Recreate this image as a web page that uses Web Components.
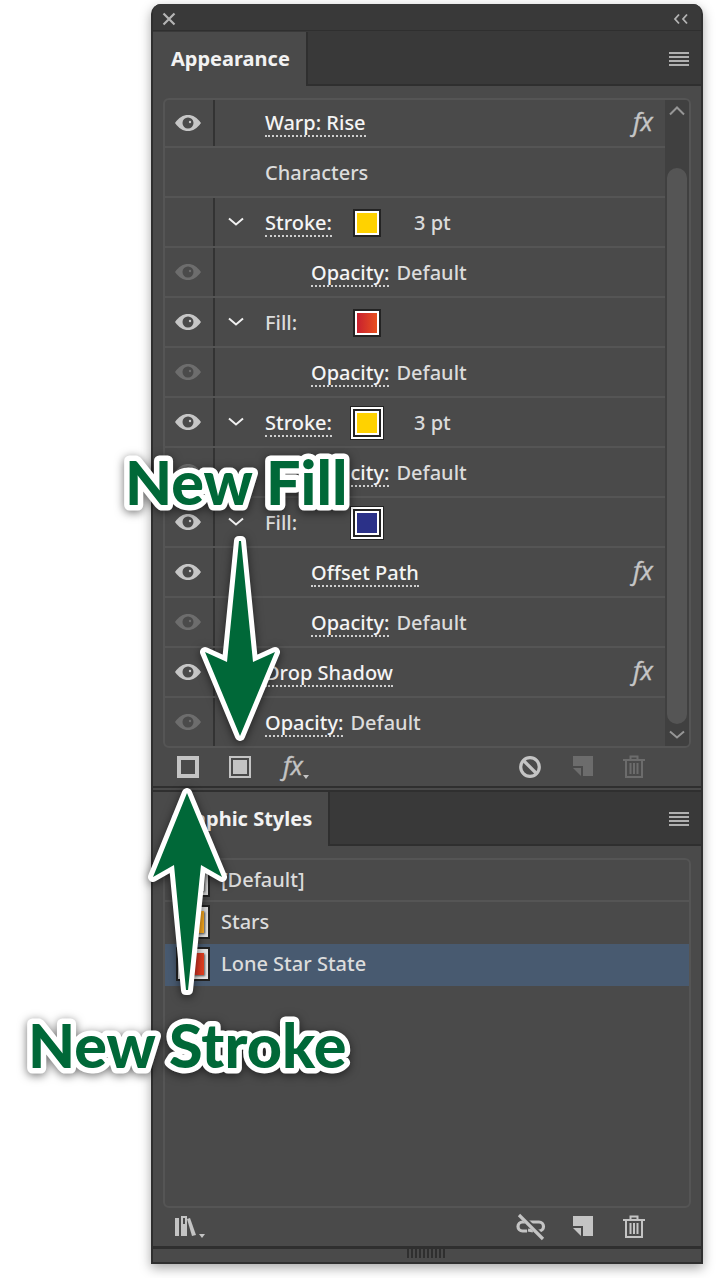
<!DOCTYPE html>
<html lang="en">
<head>
<meta charset="utf-8">
<title>Appearance panel</title>
<style>
body { margin: 0; background: #fff; font-family: "Noto Sans", "Open Sans", sans-serif; font-size: 20px; line-height: 24px; }
</style>
</head>
<body>
<appearance-guide></appearance-guide>

<script>
const define = (name, html, setup) => {
  const template = document.createElement('template');
  template.innerHTML = html;
  customElements.define(name, class extends HTMLElement {
    constructor() {
      super();
      this.attachShadow({ mode: 'open' }).append(template.content.cloneNode(true));
    }
    connectedCallback() { if (setup) setup(this, this.shadowRoot); }
  });
};

const BUTTON = 'button{all:unset;box-sizing:border-box;cursor:pointer}';

const trash = '<path d="M1 5h22M8.500 4.500V1.500h7v3" fill="none" stroke="currentColor" stroke-width="2"/><path d="M4 5v17h16V5M8.500 8v11M12 8v11M15.500 8v11" fill="none" stroke="currentColor" stroke-width="2"/>';
const fx = '<text x="4" y="24" fill="currentColor" stroke="currentColor" stroke-width="0.400" font-family="Open Sans" font-style="italic" font-size="25">fx</text>';
const ICONS = {
  close: [14, 14, '<path d="M1.500 1.500l11 11M12.500 1.500l-11 11" stroke="currentColor" stroke-width="2.200"/>'],
  collapse: [16, 12, '<path d="M6 1.500L2 6l4 4.500M14 1.500L10 6l4 4.500" fill="none" stroke="currentColor" stroke-width="1.800"/>'],
  menu: [20, 14, '<path d="M0 1h20M0 5h20M0 9h20M0 13h20" stroke="currentColor" stroke-width="2"/>'],
  eye: [26, 18, '<path fill="currentColor" fill-rule="evenodd" d="M0 9C4 3.500 8 1 13 1s9 2.500 13 8c-4 5.500-8 8-13 8S4 14.500 0 9zM13 3.500a5.500 5.500 0 1 0 0 11a5.500 5.500 0 1 0 0-11z"/><circle cx="15" cy="8" r="1.200" fill="currentColor"/>'],
  down: [16, 10, '<path d="M1 1.500l7 6 7-6" fill="none" stroke="currentColor" stroke-width="2"/>'],
  up: [16, 10, '<path d="M1 8.500l7-7 7 7" fill="none" stroke="currentColor" stroke-width="2"/>'],
  stroke: [22, 22, '<path d="M2 2h18v18H2z" fill="none" stroke="currentColor" stroke-width="4"/>'],
  fill: [22, 22, '<path d="M1 1h20v20H1z" fill="none" stroke="currentColor" stroke-width="2"/><path d="M4 4h14v14H4z" fill="currentColor"/>'],
  fx: [28, 32, fx],
  'fx-menu': [26, 32, fx + '<path d="M24 24h6l-3 4z" fill="currentColor"/>'],
  clear: [22, 22, '<circle cx="11" cy="11" r="9.300" fill="none" stroke="currentColor" stroke-width="3.200"/><path d="M5 5l12 12" stroke="currentColor" stroke-width="3.200"/>'],
  page: [20, 22, '<path d="M1 0h20v20H11V10H1z" fill="currentColor"/><path d="M1 12h8v8z" fill="currentColor"/>'],
  trash: [24, 24, trash],
  unlink: [28, 26, '<path d="M9 8H6.500a4.500 4.500 0 0 0 0 9H11M12 8h11a4.500 4.500 0 0 1 0 9h-5M12 16l5 1" fill="none" stroke="currentColor" stroke-width="3.200"/><path d="M4.500 1L28 24.500" stroke="#4a4a4a" stroke-width="5"/><path d="M3 1l24 24" stroke="currentColor" stroke-width="3.200"/>'],
  library: [26, 24, '<path d="M0 3h4v18H0zM6 1h6v20H6z" fill="currentColor"/><path d="M8 3h2v6H8z" fill="#4a4a4a"/><path d="M12 4l3-1 6 17-4 1z" fill="currentColor"/><path d="M24 19h6l-3 4z" fill="currentColor"/>'],
  // callout arrows: the long tail starts at a point and the head is barbed
  'arrow-down': [80, 212, '<path d="M39 6h2l12 121 22-10-35 84-35-84 22 10z" fill="#006838" stroke="#fff" stroke-width="10" stroke-linejoin="round" paint-order="stroke"/>'],
  'arrow-up': [80, 212, '<path d="M39 202h2l13-125 21 12-35-84-34 84 21-12z" fill="#006838" stroke="#fff" stroke-width="10" stroke-linejoin="round" paint-order="stroke"/>'],
};

define('ui-icon', `<style>:host{display:inline-flex;flex:none}svg{display:block;overflow:visible}</style><span></span>`, (el, root) => {
  const [w, h, art] = ICONS[el.getAttribute('name')];
  root.querySelector('span').innerHTML = `<svg width="${w}" height="${h}" viewBox="0 0 ${w} ${h}" aria-hidden="true">${art}</svg>`;
});

define('color-swatch', `<style>
:host{display:flex;flex:none;box-sizing:border-box;width:28px;height:28px;border:2px solid #232323;background:#fff;padding:2px}
i{flex:1;background:var(--paint)}
:host([framed]){width:34px;height:34px;border-width:1px;padding:2px}
:host([framed]) i{border:2px solid #fff;outline:2px solid #232323;margin:2px}
</style><i></i>`);

define('tab-header', `<style>${BUTTON}
:host{display:flex;height:54px;background:#393939}
.tab{padding:0 16px 0 18px;background:#4a4a4a;color:#f2f2f2;font-weight:700;line-height:24px}
.rest{flex:1;display:flex;align-items:center;justify-content:flex-end;padding:2px 12px 0 0;border:solid #2f2f2f;border-width:0 0 2px 2px;color:#b0b0b0}
.menu{display:flex}
</style><button class="tab" role="tab" aria-selected="true"><slot></slot></button>
<div class="rest"><button class="menu" aria-label="Panel menu"><ui-icon name="menu"></ui-icon></button></div>`);

define('appearance-row', `<style>${BUTTON}
:host{display:flex;height:48px;border-bottom:2px solid #555;color:#dcdcdc;font-weight:500}
:host([first]){height:46px}
:host([last]){border-bottom:0}
.eye{flex:none;width:50px;display:flex;align-items:center;justify-content:center;border-right:2px solid #333;padding-right:2px;box-sizing:border-box;color:#c6c6c6}
.eye button{display:flex}
:host([eye="dim"]) .eye{color:#6d6d6d}
:host([eye="off"]) .eye button,:host([eye="none"]) .eye button{display:none}
:host([eye="none"]) .eye{border-color:transparent}
.toggle{flex:none;width:50px;display:flex;align-items:center;color:#f0f0f0;padding-left:13px;box-sizing:border-box}
.toggle button{display:flex}
:host(:not([open])) .toggle button{display:none}
.body{flex:1;display:flex;align-items:center;gap:7px}
:host(:not([first])) .body{padding-top:1px}
:host([nested]) .body{padding-left:46px}
.label{white-space:nowrap}
:host([open]) .label{width:84px;margin-right:-7px}
.swatch{width:36px;display:flex;justify-content:center;margin-right:22px}
:host(:not([open])) .swatch{display:none}
.link{border:solid transparent;border-width:2px 0;border-bottom:2px dotted #cfcfcf;color:#f4f4f4}
:host([plain]) .link{border-color:transparent;color:inherit}
.fx{display:none;align-self:center;margin-right:8px;color:#c6c6c6}
:host([fx]) .fx{display:flex}
</style>
<div class="eye"><button aria-label="Toggle visibility"><ui-icon name="eye"></ui-icon></button></div>
<div class="toggle"><button aria-label="Collapse"><ui-icon name="down"></ui-icon></button></div>
<div class="body"><span class="label"><button class="link"><slot></slot></button></span><span class="swatch"><slot name="swatch"></slot></span><slot name="value"></slot></div>
<button class="fx" aria-label="Edit effect"><ui-icon name="fx"></ui-icon></button>`);

define('scroll-track', `<style>${BUTTON}
:host{flex:none;display:flex;flex-direction:column;align-items:center;width:24px;background:#404040;color:#969696}
button{display:flex;align-items:center;justify-content:center;width:22px;height:22px}
.thumb{flex:1;width:20px;margin-top:46px;border-radius:10px;background:#555}
</style><button aria-label="Scroll up"><ui-icon name="up"></ui-icon></button><div class="thumb"></div><button aria-label="Scroll down"><ui-icon name="down"></ui-icon></button>`);

define('tool-button', `<style>${BUTTON}
:host{display:flex;flex:none;width:52px;color:#c4c4c4}
:host([disabled]){color:#6c6c6c}
button{flex:1;display:flex;align-items:center;justify-content:center}
</style><button></button>`, (el, root) => {
  const b = root.querySelector('button');
  b.setAttribute('aria-label', el.getAttribute('label'));
  b.disabled = el.hasAttribute('disabled');
  b.innerHTML = `<ui-icon name="${el.getAttribute('icon')}"></ui-icon>`;
});

define('tool-bar', `<style>
:host{display:flex;justify-content:space-between;height:38px;padding:0 41px 0 9px}
div{display:flex}
</style><div><slot></slot></div><div><slot name="end"></slot></div>`);

define('style-row', `<style>${BUTTON}
:host{display:flex;height:40px;border-bottom:2px solid #555;color:#dcdcdc;font-weight:500}
:host([plain]){border-color:transparent}
:host([selected]){background:#485a70;border-color:transparent}
button{flex:1;display:flex;align-items:center;gap:11px;padding-left:11px}
.thumb{flex:none;box-sizing:border-box;width:34px;height:34px;border:2px solid #222;background:#e4e4e4;padding:4px;display:flex}
i{flex:1;background:var(--paint);box-shadow:1px 1px 2px #555}
</style><button><span class="thumb"><i></i></span><slot></slot></button>`);

define('call-out', `<style>
:host{position:absolute;display:block;filter:drop-shadow(0 2px 5px rgba(0,0,0,.55));pointer-events:none}
</style><slot></slot>`);

define('call-text', `<style>
:host{display:block}
svg{display:block;overflow:visible}
text{fill:#006838;stroke:#fff;stroke-width:11px;stroke-linejoin:round;paint-order:stroke;font:900 61px Lato,sans-serif}
</style><svg width="330" height="72"><text x="0" y="56"></text></svg>`, (el, root) => {
  root.querySelector('text').textContent = el.getAttribute('text');
});

define('appearance-guide', `<style>${BUTTON}
:host{display:block;position:relative;padding:4px 23px 14px 151px}
main{background:#4a4a4a;border:solid #2f2f2f;border-width:0 2px 2px;border-radius:10px 10px 0 0;box-shadow:0 4px 12px rgba(0,0,0,.35)}
.title{display:flex;align-items:center;justify-content:space-between;height:27px;padding:4px 12px 0 9px;box-sizing:border-box;background:#393939;border-radius:8px 8px 0 0;color:#b4b4b4;border-bottom:1px solid #2f2f2f}
.top{padding-bottom:1px;background:#393939;border-radius:10px 10px 0 0}
.title button{display:flex}
section{padding:12px 10px 0}
.list{display:flex;box-sizing:border-box;border:2px solid #555;border-radius:6px;overflow:hidden}
.rows{flex:1;min-width:0}
.styles{min-height:350px}
.split{height:2px;border:solid #2f2f2f;border-width:2px 0}
.grip{height:13px;border-top:3px solid #2f2f2f;display:flex;justify-content:center}
.grip i{width:40px;height:9px;background:repeating-linear-gradient(90deg,#2f2f2f 0 2px,transparent 2px 4px)}
.n1{left:125px;top:449px}.n2{left:28px;top:1012px}.a1{left:200px;top:535px}.a2{left:147px;top:788px}
</style>
<main>
<div class="top"><div class="title"><button aria-label="Close"><ui-icon name="close"></ui-icon></button><button aria-label="Collapse panels"><ui-icon name="collapse"></ui-icon></button></div></div>
<tab-header>Appearance</tab-header>
<section><div class="list"><div class="rows">
<appearance-row first fx>Warp: Rise</appearance-row>
<appearance-row eye="none" plain>Characters</appearance-row>
<appearance-row eye="off" open>Stroke:<color-swatch slot="swatch" style="--paint:#ffd200"></color-swatch><span slot="value">3 pt</span></appearance-row>
<appearance-row eye="dim" nested>Opacity:<span slot="value">Default</span></appearance-row>
<appearance-row open plain>Fill:<color-swatch slot="swatch" style="--paint:linear-gradient(90deg,#c8202f,#e8501f)"></color-swatch></appearance-row>
<appearance-row eye="dim" nested>Opacity:<span slot="value">Default</span></appearance-row>
<appearance-row open>Stroke:<color-swatch framed slot="swatch" style="--paint:#ffd200"></color-swatch><span slot="value">3 pt</span></appearance-row>
<appearance-row eye="dim" nested>Opacity:<span slot="value">Default</span></appearance-row>
<appearance-row open plain>Fill:<color-swatch framed slot="swatch" style="--paint:#2b3188"></color-swatch></appearance-row>
<appearance-row nested fx>Offset Path</appearance-row>
<appearance-row eye="dim" nested>Opacity:<span slot="value">Default</span></appearance-row>
<appearance-row fx>Drop Shadow</appearance-row>
<appearance-row eye="dim" last>Opacity:<span slot="value">Default</span></appearance-row>
</div><scroll-track></scroll-track></div></section>
<tool-bar>
<tool-button icon="stroke" label="New stroke"></tool-button><tool-button icon="fill" label="New fill"></tool-button><tool-button icon="fx-menu" label="Add effect"></tool-button>
<tool-button slot="end" icon="clear" label="Clear appearance"></tool-button><tool-button slot="end" icon="page" label="Duplicate item" disabled></tool-button><tool-button slot="end" icon="trash" label="Delete item" disabled></tool-button>
</tool-bar>
<div class="split"></div>
<tab-header>Graphic Styles</tab-header>
<section><div class="list styles"><div class="rows">
<style-row style="--paint:#fff">[Default]</style-row>
<style-row plain style="--paint:linear-gradient(90deg,#e87a1f,#ffb020)">Stars</style-row>
<style-row selected style="--paint:linear-gradient(90deg,#c8202f,#e0401f)">Lone Star State</style-row>
</div></div></section>
<tool-bar>
<tool-button icon="library" label="Style libraries"></tool-button>
<tool-button slot="end" icon="unlink" label="Break link"></tool-button><tool-button slot="end" icon="page" label="New style"></tool-button><tool-button slot="end" icon="trash" label="Delete style"></tool-button>
</tool-bar>
<div class="grip"><i></i></div>
</main>
<call-out class="a1"><ui-icon name="arrow-down"></ui-icon></call-out>
<call-out class="a2"><ui-icon name="arrow-up"></ui-icon></call-out>
<call-out class="n1"><call-text text="New Fill"></call-text></call-out>
<call-out class="n2"><call-text text="New Stroke"></call-text></call-out>`);
</script>
</body>
</html>
